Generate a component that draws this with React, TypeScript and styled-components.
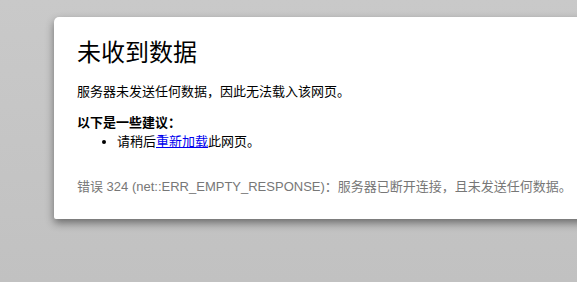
import React from 'react';
import styled, {createGlobalStyle} from "styled-components";

const Global = createGlobalStyle`
  html, body {
    margin: 0;
    height: 100%;
  }
  body {
    background: linear-gradient(#c9c9c9, #c1c1c1);
    font-family: "Liberation Sans", "Noto Sans CJK SC", sans-serif;
    overflow: hidden;
  }
`;

// clips the frame, which runs on past the right edge of the window
const Page = styled.div`
  overflow: hidden;
  padding: 17px 0 20px 54px;
`;

const Frame = styled.div`
  width: 620px;
  background: #fff;
  border-radius: 5px 0 0 2px;
  box-shadow: 0 4px 9px rgba(0, 0, 0, 0.45);
  padding: 18px 23px 23px 23px;
`;

const Title = styled.h1`
  margin: 0;
  font-size: 24px;
  line-height: 35px;
  font-weight: normal;
  color: #000;
`;

const Text = styled.p<{ $bold?: boolean }>`
  margin: 12px 0 0 0;
  font-size: 13px;
  line-height: 19px;
  font-weight: ${p => p.$bold ? 'bold' : 'normal'};
  color: #000;
`;

const Suggestions = styled.ul`
  margin: 0;
  padding-left: 40px;
  font-size: 13px;
  line-height: 19px;
`;

const Link = styled.a`
  color: #0000ee;
  text-decoration: underline;
`;

const ErrorCode = styled.div`
  margin-top: 26px;
  font-size: 13px;
  line-height: 19px;
  color: #777;
  white-space: nowrap;
`;

export default function App() {
    return <>
        <Global/>
        <Page>
            <Frame>
                <Title>未收到数据</Title>
                <Text>服务器未发送任何数据，因此无法载入该网页。</Text>
                <Text $bold>以下是一些建议：</Text>
                <Suggestions>
                    <li>请稍后<Link href="#">重新加载</Link>此网页。</li>
                </Suggestions>
                <ErrorCode>错误 324 (net::ERR_EMPTY_RESPONSE)：服务器已断开连接，且未发送任何数据。</ErrorCode>
            </Frame>
        </Page>
    </>;
}
